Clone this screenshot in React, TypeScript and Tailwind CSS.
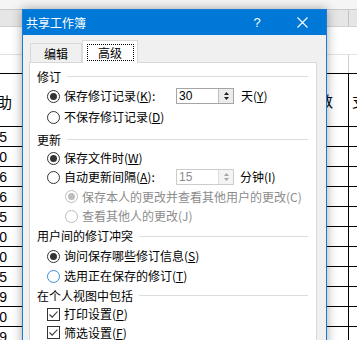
import React from "react";

const cjk = "font-['Noto_Sans_CJK_SC','Microsoft_YaHei',sans-serif]";

function Radio({ checked, disabled, focus }: { checked?: boolean; disabled?: boolean; focus?: boolean }) {
  const ring = disabled ? "border-[#bcbcbc]" : focus ? "border-[#3c8ad6]" : "border-[#333333]";
  return (
    <span className={`flex h-[13px] w-[13px] shrink-0 items-center justify-center rounded-full border bg-white ${ring}`}>
      {checked && <span className={`h-[7px] w-[7px] rounded-full ${disabled ? "bg-[#bcbcbc]" : "bg-[#333333]"}`} />}
    </span>
  );
}

function Check() {
  return (
    <span className="flex h-[13px] w-[13px] shrink-0 items-center justify-center border border-[#333333] bg-white">
      <svg width="11" height="11" viewBox="0 0 11 11">
        <path d="M1.5 5.5 L4.2 8.2 L9.5 2.5" fill="none" stroke="#333" strokeWidth="1.1" />
      </svg>
    </span>
  );
}

// spin box: number field + up/down buttons
function Spin({ value, disabled }: { value: string; disabled?: boolean }) {
  const arrow = disabled ? "#a8a8a8" : "#222";
  return (
    <span
      className={`flex h-[16px] w-[58px] border ${disabled ? "border-[#cccccc] text-[#8c8c8c]" : "border-[#a5a5a5] text-black"} bg-white`}
    >
      <span className="flex flex-1 items-center pl-[2px] font-['Liberation_Sans',sans-serif] text-[12px] leading-none">
        {value}
      </span>
      <span className={`flex w-[15px] flex-col border-l ${disabled ? "border-[#dddddd] bg-[#f4f4f4]" : "border-[#bdbdbd] bg-[#ececec]"}`}>
        <span className="flex flex-1 items-end justify-center pb-[1px]">
          <svg width="5" height="3" viewBox="0 0 5 3">
            <path d="M0 3 L2.5 0 L5 3 Z" fill={arrow} />
          </svg>
        </span>
        <span className="flex flex-1 items-start justify-center pt-[1px]">
          <svg width="5" height="3" viewBox="0 0 5 3">
            <path d="M0 0 L2.5 3 L5 0 Z" fill={arrow} />
          </svg>
        </span>
      </span>
    </span>
  );
}

function Group({ title, className }: { title: string; className: string }) {
  return (
    <div className={`flex items-center ${className}`}>
      <span>{title}</span>
      <span className="ml-[6px] h-px flex-1 bg-[#dcdcdc]" />
    </div>
  );
}

const nums = ["5", "0", "6", "6", "5", "0", "0", "5", "9", "0", "9"];

export default function App() {
  return (
    <div className="relative h-[340px] w-[357px] overflow-hidden bg-white">
      {/* sheet behind the dialog */}
      <div className="h-[10px] border-b border-[#c9c9c9] bg-[#f5f5f5]" />
      <div className="flex h-[17px] border-b border-[#d2d2d2] bg-[#e6e6e6]">
        <div className="w-[349px] shrink-0 border-r border-[#c3c3c3]" />
      </div>
      <div className="h-[28px] border-b border-[#e2e2e2]" />
      <div className="flex h-[18px]">
        <div className="w-[349px] shrink-0 border-r border-[#d0d0d0]" />
      </div>
      <div className="border-t border-black">
        <div className="flex h-[53px] border-b border-black">
          <div className="flex w-[20px] shrink-0 items-center justify-end overflow-hidden pr-[8px] pt-[2px] text-[15px] leading-none">
            <span className={cjk}>助</span>
          </div>
          <div className={`flex w-[329px] shrink-0 items-center justify-end border-r border-black pr-[15px] text-[15px] leading-none ${cjk}`}>
            数
          </div>
          <div className={`flex min-w-0 flex-1 items-center overflow-hidden pl-[3px] text-[15px] leading-none ${cjk}`}>
            <span className="shrink-0">支</span>
          </div>
        </div>
        {nums.map((n, i) => (
          <div key={i} className="flex h-[20px] border-b border-black">
            <div className="flex w-[20px] shrink-0 items-center justify-end overflow-hidden pr-[13px] font-['Liberation_Sans',sans-serif] text-[14px] leading-none">
              {n}
            </div>
            <div className="w-[329px] shrink-0 border-r border-black" />
          </div>
        ))}
      </div>

      {/* dialog window */}
      <div
        className={`absolute left-[22px] top-[9px] flex h-[345px] w-[305px] flex-col border border-[#1a7bd5] bg-[#f0f0f0] text-[12px] leading-[14px] text-black shadow-[0_0_10px_rgba(0,0,0,0.35)] ${cjk}`}
      >
        <div className="flex h-[25px] shrink-0 items-center bg-[#0078d7] pl-[3px] text-white">
          <span className="pt-[1px]">共享工作簿</span>
          <span className="ml-auto w-[14px] text-center font-['Liberation_Sans',sans-serif] text-[13px]">?</span>
          <span className="ml-[31px] mr-[17px] flex w-[14px] justify-center">
            <svg width="11" height="11" viewBox="0 0 11 11">
              <path d="M0.5 0.5 L10.5 10.5 M10.5 0.5 L0.5 10.5" stroke="#fff" strokeWidth="1.1" />
            </svg>
          </span>
        </div>

        <div className="flex flex-1 flex-col pl-[6px] pt-[5px]">
          {/* tabs */}
          <div className="relative z-10 flex h-[22px] items-end">
            <div className="ml-[1px] flex h-[19px] w-[52px] items-center justify-center border-x border-t border-[#d9d9d9] pt-[2px]">
              编辑
            </div>
            <div className="-mb-px flex h-[23px] w-[56px] justify-center border-x border-t border-[#d9d9d9] bg-white">
              <span className="mt-[3px] flex h-[17px] w-[47px] items-center justify-center border border-dotted border-black pt-[1px]">
                高级
              </span>
            </div>
          </div>

          {/* tab page */}
          <div className="flex w-[288px] flex-1 flex-col border border-[#d9d9d9] bg-white pl-[7px] pr-[8px] pt-[4px]">
            <Group title="修订" className="h-[19px]" />
            <div className="flex h-[20px] items-center gap-[4px] pl-[10px]">
              <Radio checked />
              <span className="w-[108px]">
                保存修订记录(<u>K</u>):
              </span>
              <Spin value="30" />
              <span className="ml-[3px]">
                天(<u>Y</u>)
              </span>
            </div>
            <div className="flex h-[22px] items-center gap-[4px] pl-[10px]">
              <Radio />
              <span>
                不保存修订记录(<u>D</u>)
              </span>
            </div>

            <Group title="更新" className="h-[21px] pt-[2px]" />
            <div className="flex h-[18px] items-center gap-[4px] pl-[10px]">
              <Radio checked />
              <span>
                保存文件时(<u>W</u>)
              </span>
            </div>
            <div className="flex h-[20px] items-center gap-[4px] pl-[10px]">
              <Radio />
              <span className="w-[108px]">
                自动更新间隔(<u>A</u>):
              </span>
              <Spin value="15" disabled />
              <span className="ml-[2px]">分钟(I)</span>
            </div>
            <div className="flex h-[19px] items-center gap-[4px] pl-[28px] text-[#8c8c8c]">
              <Radio checked disabled />
              <span>保存本人的更改并查看其他用户的更改(C)</span>
            </div>
            <div className="flex h-[20px] items-center gap-[4px] pl-[28px] text-[#8c8c8c]">
              <Radio disabled />
              <span>查看其他人的更改(J)</span>
            </div>

            <Group title="用户间的修订冲突" className="h-[20px]" />
            <div className="flex h-[20px] items-center gap-[4px] pl-[10px]">
              <Radio checked />
              <span>
                询问保存哪些修订信息(<u>S</u>)
              </span>
            </div>
            <div className="flex h-[20px] items-center gap-[4px] pl-[10px]">
              <Radio focus />
              <span>
                选用正在保存的修订(<u>T</u>)
              </span>
            </div>

            <Group title="在个人视图中包括" className="h-[19px]" />
            <div className="flex h-[18px] items-center gap-[4px] pl-[10px]">
              <Check />
              <span>
                打印设置(<u>P</u>)
              </span>
            </div>
            <div className="flex h-[19px] items-center gap-[4px] pl-[10px]">
              <Check />
              <span>
                筛选设置(<u>F</u>)
              </span>
            </div>
          </div>
        </div>
      </div>
    </div>
  );
}
